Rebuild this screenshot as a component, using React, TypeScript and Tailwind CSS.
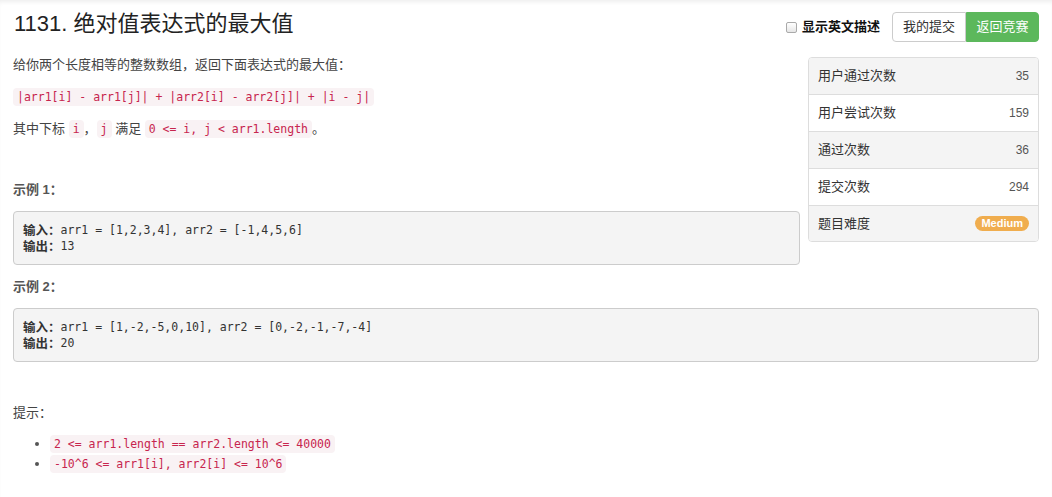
import React from 'react';

const stats = [
  { label: '用户通过次数', value: '35' },
  { label: '用户尝试次数', value: '159' },
  { label: '通过次数', value: '36' },
  { label: '提交次数', value: '294' },
];

const Code: React.FC<{ children: React.ReactNode }> = ({ children }) => (
  <code className="font-['DejaVu_Sans_Mono',monospace] text-[11.5px] text-[#c7254e] bg-[#f9f2f4] rounded-[4px] px-[4px] py-[2px]">
    {children}
  </code>
);

const Example: React.FC<{ input: string; output: string }> = ({ input, output }) => (
  <div className="mt-[11px] overflow-auto bg-[#f4f4f4] border border-[#ccc] rounded-[4px] px-[9px] py-[10px] font-['DejaVu_Sans_Mono',monospace] text-[11.5px] text-[#333] whitespace-pre">
    <div className="h-[16px] leading-[16px] flex items-center">
      <strong className="font-['Noto_Sans_CJK_SC',sans-serif] text-[12.5px] leading-[16px]">输入：</strong>
      <span>{input}</span>
    </div>
    <div className="h-[16px] leading-[16px] flex items-center">
      <strong className="font-['Noto_Sans_CJK_SC',sans-serif] text-[12.5px] leading-[16px]">输出：</strong>
      <span>{output}</span>
    </div>
  </div>
);

const App: React.FC = () => {
  return (
    <div className="min-h-[497px] bg-white text-[13px] text-[#333] font-['Liberation_Sans','Noto_Sans_CJK_SC',sans-serif] shadow-[inset_0_4px_4px_-2px_rgba(0,0,0,0.07)] px-[13px] pt-[12px]">
      {/* header */}
      <div className="flex items-start justify-between">
        <h3 className="text-[22px] leading-[24px] text-[#222] ml-[1px]">1131. 绝对值表达式的最大值</h3>
        <div className="flex items-center">
          <label className="flex items-center gap-[5px] mr-[12px] font-bold text-[#111]">
            <span className="w-[11px] h-[11px] border border-[#aaa] rounded-[2px] bg-gradient-to-b from-white to-[#e6e6e6]" />
            显示英文描述
          </label>
          <div className="flex">
            <button className="w-[74px] h-[30px] border border-[#ccc] rounded-l-[4px] bg-white text-[#333]">我的提交</button>
            <button className="w-[73px] h-[30px] border border-[#5cb85c] rounded-r-[4px] bg-[#5cb85c] text-white">返回竞赛</button>
          </div>
        </div>
      </div>

      <div className="mt-[13px]">
        {/* stats panel */}
        <div className="float-right w-[231px] ml-[8px] mt-[2px] border border-[#ddd] rounded-[4px] overflow-hidden">
          {stats.map((s, i) => (
            <div
              key={s.label}
              className={`flex items-center justify-between px-[9px] ${i > 0 ? 'h-[37px] border-t border-[#ddd]' : 'h-[36px]'} ${i % 2 === 0 ? 'bg-[#f4f4f4]' : 'bg-white'}`}
            >
              <span>{s.label}</span>
              <span className="text-[#555] text-[12px]">{s.value}</span>
            </div>
          ))}
          <div className="h-[36px] flex items-center justify-between px-[9px] border-t border-[#ddd] bg-[#f4f4f4]">
            <span>题目难度</span>
            <span className="bg-[#f0ad4e] text-white font-bold text-[11px] leading-[15px] rounded-full px-[6px]">Medium</span>
          </div>
        </div>

        {/* description */}
        <p className="leading-[20px] mb-[12px] text-[#444]">给你两个长度相等的整数数组，返回下面表达式的最大值：</p>
        <p className="leading-[20px] mb-[12px]">
          <Code>|arr1[i] - arr1[j]| + |arr2[i] - arr2[j]| + |i - j|</Code>
        </p>
        <p className="leading-[20px] text-[#444]">
          其中下标 <Code>i</Code>，<Code>j</Code> 满足 <Code>0 &lt;= i, j &lt; arr1.length</Code>。
        </p>

        <p className="leading-[20px] mt-[41px] font-bold text-[#555]">示例 1：</p>
        <Example input="arr1 = [1,2,3,4], arr2 = [-1,4,5,6]" output="13" />

        <p className="leading-[20px] mt-[12px] font-bold text-[#555]">示例 2：</p>
        <Example input="arr1 = [1,-2,-5,0,10], arr2 = [0,-2,-1,-7,-4]" output="20" />

        <p className="leading-[20px] mt-[41px] text-[#444]">提示：</p>
        <ul className="mt-[11px] pl-[37px] list-disc marker:text-[#555]">
          <li className="leading-[20px]"><Code>2 &lt;= arr1.length == arr2.length &lt;= 40000</Code></li>
          <li className="leading-[20px]"><Code>-10^6 &lt;= arr1[i], arr2[i] &lt;= 10^6</Code></li>
        </ul>
      </div>
    </div>
  );
};

export default App;
